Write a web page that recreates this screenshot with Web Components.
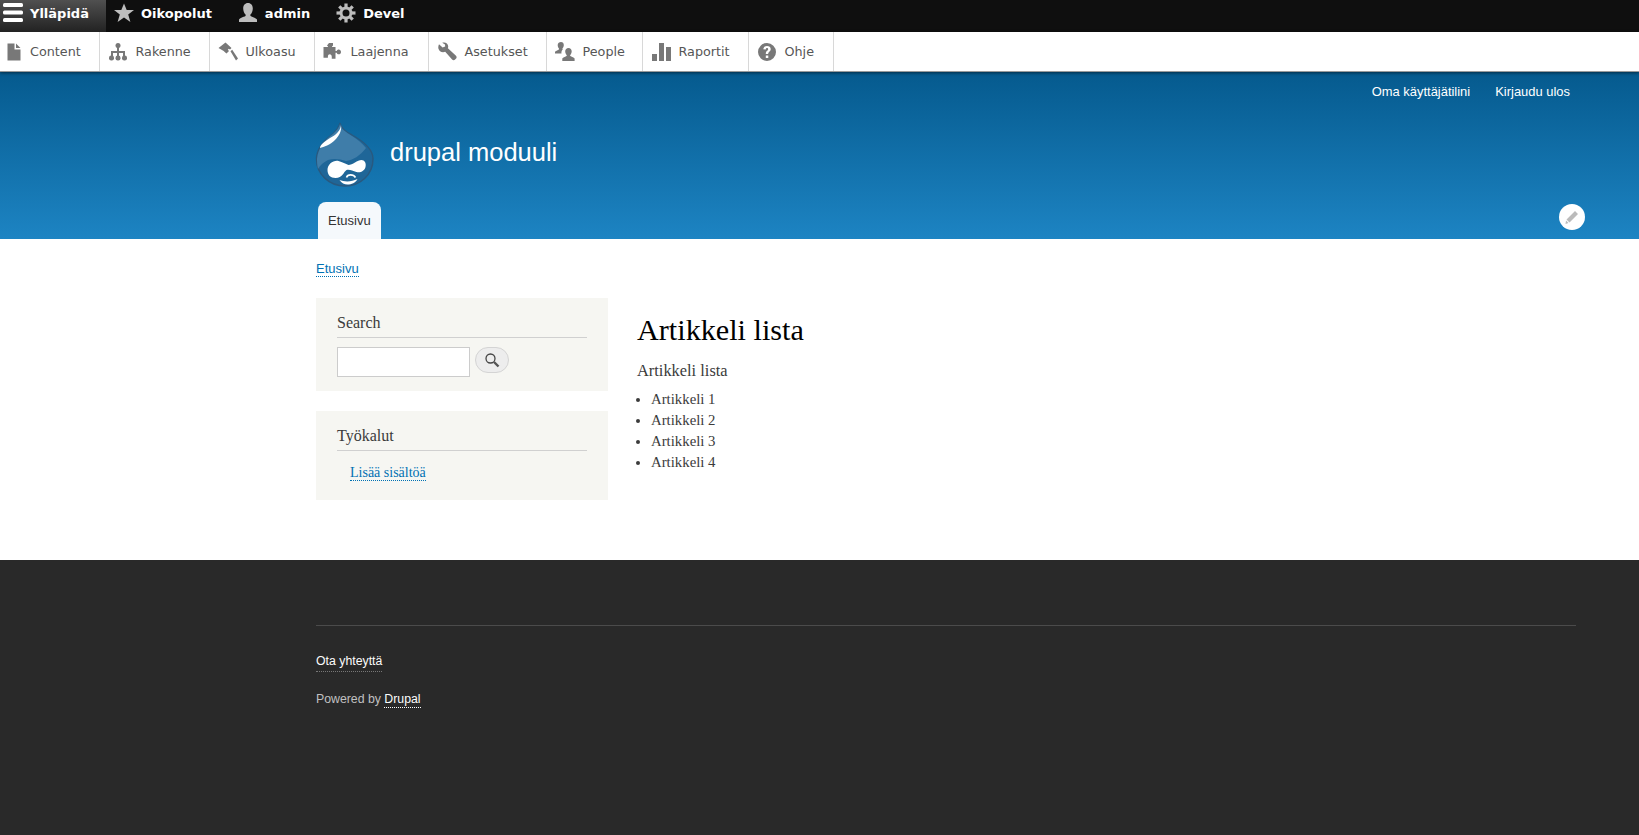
<!DOCTYPE html>
<html lang="fi">
<head>
<meta charset="utf-8">
<title>drupal moduuli</title>
<style>
  html, body { margin: 0; padding: 0; background: #292929; }
  body { font-family: "Liberation Serif", serif; min-height: 835px; display: flex; flex-direction: column; }
</style>
</head>
<body>
<admin-toolbar>
  <bar-tab icon="menu" active>Ylläpidä</bar-tab>
  <bar-tab icon="star">Oikopolut</bar-tab>
  <bar-tab icon="user">admin</bar-tab>
  <bar-tab icon="gear">Devel</bar-tab>
  <tray-item slot="tray" icon="file" w="100" first>Content</tray-item>
  <tray-item slot="tray" icon="tree" w="110">Rakenne</tray-item>
  <tray-item slot="tray" icon="hammer" w="105">Ulkoasu</tray-item>
  <tray-item slot="tray" icon="puzzle" w="114">Laajenna</tray-item>
  <tray-item slot="tray" icon="wrench" w="118">Asetukset</tray-item>
  <tray-item slot="tray" icon="people" w="96">People</tray-item>
  <tray-item slot="tray" icon="bars" w="106">Raportit</tray-item>
  <tray-item slot="tray" icon="help" w="85">Ohje</tray-item>
</admin-toolbar>
<site-header name="drupal moduuli">
  <a slot="secondary">Oma käyttäjätilini</a>
  <a slot="secondary">Kirjaudu ulos</a>
  <span slot="tabs">Etusivu</span>
</site-header>
<page-main>
  <dotted-link slot="crumb" sans>Etusivu</dotted-link>
  <side-block slot="side" heading="Search"><search-form></search-form></side-block>
  <side-block slot="side" heading="Työkalut"><tool-link><dotted-link>Lisää sisältöä</dotted-link></tool-link></side-block>
  <article-list heading="Artikkeli lista" lead="Artikkeli lista">
    <li>Artikkeli 1</li>
    <li>Artikkeli 2</li>
    <li>Artikkeli 3</li>
    <li>Artikkeli 4</li>
  </article-list>
</page-main>
<page-footer></page-footer>

<script>
// 8 teeth for the gear, easier than writing the outline by hand
const gearTeeth = [0, 45, 90, 135, 180, 225, 270, 315]
  .map(a => `<rect x="8.400" y="0.500" width="3.200" height="4" transform="rotate(${a} 10 10)"/>`).join('');

const ICONS = {
  menu: '<svg viewBox="0 0 20 20" width="20" height="20"><g fill="#fff"><rect x="0" y="0" width="20" height="4" rx="1.500"/><rect x="0" y="7.500" width="20" height="4" rx="1.500"/><rect x="0" y="15" width="20" height="4" rx="1.500"/></g></svg>',
  star: '<svg viewBox="0 0 20 20" width="20" height="20"><path fill="#bdbdbd" d="M10 .5l2.700 6.500H20l-5.800 4.600L16.400 19 10 14.600 3.600 19l2.200-7.400L0 7h7.300z"/></svg>',
  user: '<svg viewBox="0 0 20 20" width="20" height="20"><path fill="#bdbdbd" d="M10 0c3 0 4.800 2.300 4.800 5.400 0 2.600-1 4.700-2.300 6.100-.5.800 0 1.700 1 2.100 2 .8 4.500 1.600 5.500 3v2.400H1v-2.400c1-1.400 3.500-2.200 5.500-3 1-.4 1.500-1.300 1-2.100C6.200 10.100 5.200 8 5.200 5.400 5.200 2.300 7 0 10 0z"/></svg>',
  gear: `<svg viewBox="0 0 20 20" width="20" height="20"><g fill="#bdbdbd">${gearTeeth}</g><circle cx="10" cy="10" r="5" fill="none" stroke="#bdbdbd" stroke-width="3"/></svg>`,
  file: '<svg viewBox="0 0 16 20" width="16" height="20"><path fill="#787878" d="M1.500 1.500h7v6h6v11h-13zM10 1.500l4.500 4.500H10z"/></svg>',
  tree: '<svg viewBox="0 0 20 20" width="20" height="20"><g fill="#787878"><circle cx="10" cy="3.500" r="2.500"/><rect x="9" y="5" width="2" height="9"/><rect x="3" y="9" width="14" height="2"/><rect x="3" y="9" width="2" height="5"/><rect x="15" y="9" width="2" height="5"/><rect x="1" y="13.500" width="5" height="5" rx="2.200"/><rect x="7.500" y="13.500" width="5" height="5" rx="2.200"/><rect x="14" y="13.500" width="5" height="5" rx="2.200"/></g></svg>',
  hammer: '<svg viewBox="0 0 20 20" width="20" height="20"><path fill="#787878" d="M7.500.5l6 5.500-1.500 1.500-1.200-.8-1 1 1.200 1.300-2.500 2.500-1.800-1.500-1-1L.5 6zM12.500 9.300l1.700-1.600L20 16.500 18 18.500z"/></svg>',
  puzzle: '<svg viewBox="0 0 20 20" width="20" height="20"><path fill="#787878" d="M6 1h4v2.500L9 4.500V5h3.500v4h1.200c.4-1 1-1.500 2-1.500 1.300 0 2.300 1 2.300 2.400s-1 2.400-2.300 2.400c-1 0-1.600-.5-2-1.500h-1.200v6H9c-.5-.2-.2-1-.2-1.500C8.800 13 7.800 12.300 6.800 12.300S4.900 13 4.900 14.300c0 .5.300 1.300-.2 1.500H.5V5H5v-.5L4 3.500z"/></svg>',
  wrench: '<svg viewBox="0 0 20 20" width="20" height="20"><path fill="#787878" d="M2 2.200l3.600 3.200 2.600-1L8 2.500 5.200.8C8-.4 11 1.300 11.200 4.200c0 .8-.1 1.400-.3 2L19 13.700c.8.800.8 1.900.1 2.900l-1 1c-.9.900-2 .9-3 0L8.200 9.800c-3 1.200-6.200-.3-6.800-3.300-.3-1.500 0-3 .6-4.300z"/></svg>',
  people: '<svg viewBox="0 0 20 20" width="20" height="20"><path fill="#787878" d="M6 0C7.700 0 8.800 1.300 8.800 3c0 1.400-.6 2.600-1.300 3.400-.3.400 0 1 .4 1.300l-.6.300C6.500 9 6.300 10.500 6.500 11.500H0V9.800c.8-.8 2.300-1.300 3.500-2 .5-.3.700-.9.400-1.300C3.200 5.600 2.700 4.400 2.700 3 2.700 1.300 4.300 0 6 0zM13.500 6c1.900 0 3.200 1.500 3.200 3.300 0 1.500-.6 2.800-1.400 3.700-.4.500-.1 1 .5 1.300 1.300.7 3 1.200 3.800 2.200V19H7.300v-2.500c.8-1 2.500-1.500 3.800-2.200.6-.3.900-.8.500-1.300-.8-.9-1.400-2.200-1.400-3.700C10.200 7.500 11.600 6 13.500 6z"/></svg>',
  bars: '<svg viewBox="0 0 20 20" width="20" height="20"><g fill="#787878"><rect x="1" y="12" width="5" height="7"/><rect x="8" y="1" width="5" height="18"/><rect x="15" y="5" width="5" height="14"/></g></svg>',
  help: '<svg viewBox="0 0 20 20" width="20" height="20"><path fill="#787878" fill-rule="evenodd" d="M10 1a9 9 0 110 18 9 9 0 010-18zM8.800 13.500v2.500h2.500v-2.500zM10 4C7.900 4 6.500 5.200 6.300 7.300l2.400.3c.1-1 .5-1.500 1.300-1.500.7 0 1.200.4 1.200 1.100 0 .6-.4 1-1 1.500-1 .8-1.400 1.500-1.400 2.800v.4h2.400v-.3c0-.7.200-1 .9-1.600 1-.8 1.600-1.600 1.600-2.900C13.700 5.200 12.200 4 10 4z"/></svg>'
};

class AdminToolbar extends HTMLElement {
  constructor() {
    super();
    this.attachShadow({ mode: 'open' });
    this.shadowRoot.innerHTML = `
      <style>
        :host { display: block; position: relative; z-index: 2; }
        .top { display: flex; height: 32px; background: #0f0f0f; }
        .tray { display: flex; height: 39px; background: #fff; border-bottom: 1px solid #9a9a9a; box-shadow: 0 1px 3px rgba(0,0,0,.5); }
      </style>
      <div class="top"><slot></slot></div>
      <div class="tray"><slot name="tray"></slot></div>
    `;
  }
}

class BarTab extends HTMLElement {
  constructor() {
    super();
    this.attachShadow({ mode: 'open' });
    this.shadowRoot.innerHTML = `
      <style>
        :host { display: flex; align-items: center; gap: 7px; padding: 0 18px 6px 8px; height: 32px; box-sizing: border-box;
          font: bold 13px "DejaVu Sans", sans-serif; color: #fff; }
        :host([active]) { background: linear-gradient(#505050, #222); gap: 7px; padding: 0 17px 6px 3px; }
        svg { display: block; }
      </style>
      <span id="i" style="display:flex"></span><slot></slot>
    `;
  }
  connectedCallback() {
    this.shadowRoot.getElementById('i').innerHTML = ICONS[this.getAttribute('icon')] || '';
  }
}

class TrayItem extends HTMLElement {
  constructor() {
    super();
    this.attachShadow({ mode: 'open' });
    this.shadowRoot.innerHTML = `
      <style>
        :host { display: flex; align-items: center; gap: 8px; box-sizing: border-box; height: 39px; padding-left: 7.500px;
          border-right: 1px solid #d8d8d8; font: 12.750px "DejaVu Sans", sans-serif; color: #565656; }
        :host([first]) { padding-left: 6px; }
        svg { display: block; }
      </style>
      <span id="i" style="display:flex"></span><slot></slot>
    `;
  }
  connectedCallback() {
    this.style.width = this.getAttribute('w') + 'px';
    this.shadowRoot.getElementById('i').innerHTML = ICONS[this.getAttribute('icon')] || '';
  }
}

class DrupalLogo extends HTMLElement {
  constructor() {
    super();
    this.attachShadow({ mode: 'open' });
    this.shadowRoot.innerHTML = `
      <style>:host { display: block; width: 58px; height: 66px; } svg { display: block; overflow: visible; }</style>
      <svg viewBox="0 0 58 66" width="58" height="66">
        <path fill="#1f6698" stroke="#29597f" stroke-width="1.400" d="M24 0C25 6 30 9 36 12 47 18 57 26 57 36 57 52 44 63 29 63 13 63 .5 51 .5 36 .5 24 10 16 17 11 20 8 23 5 24 0z"/>
        <path fill="#3f7da9" d="M24 1C25 6 30 9 36 13 41 16 46 20 50 25 44 33 37 37 30 38 24 36 18 35 12 37 8 39 4 42 2 46 1 42 1 38 1 36 2 24 10 16 17 11 20 8 23 5 24 1z"/>
        <path fill="#fff" d="M25 2C25 7 20 12 14 15 9 18 4 22 4 25 8 24 14 22 19 17 23 13 26 8 25 2z"/>
        <g transform="translate(-1.500 0)">
          <path fill="#fff" d="M13 47C13 41 19 37 24 38 28 39 31 41 34 42 38 42 43 37 47 37 50 37 52 40 51 44 50 48 46 50 42 49 38 48 35 46 32 47 29 49 28 55 21 55 16 55 13 52 13 47z"/>
          <path fill="none" stroke="#fff" stroke-width="1.600" d="M32 54.500C33 51 39 51 41 54.500"/>
          <path fill="#fff" d="M25 57C30 59 37 59 43 56 41 60 37 61.500 33 61.500 30 61.500 27 60 25 57z"/>
        </g>
      </svg>
    `;
  }
}
customElements.define('drupal-logo', DrupalLogo);

class SiteHeader extends HTMLElement {
  constructor() {
    super();
    this.attachShadow({ mode: 'open' });
    this.shadowRoot.innerHTML = `
      <style>
        :host { display: block; position: relative; height: 167px; box-sizing: border-box;
          background: linear-gradient(#055a8e, #1d84c3); color: #fff; font-family: "Liberation Sans", sans-serif; }
        .secondary { display: flex; justify-content: flex-end; gap: 25px; padding: 12px 69px 0 0; height: 39px; box-sizing: border-box;
          font-size: 12.950px; line-height: 16px; }
        .brand { display: flex; align-items: center; gap: 16px; padding-left: 316px; height: 66px; margin-top: 12px; }
        .name { font-size: 25.500px; position: relative; top: -4px; }
        .tabs { display: flex; padding-left: 318px; margin-top: 13px; }
        .tab { display: flex; align-items: center; height: 37px; padding: 0 10px; box-sizing: border-box; background: #f5f9fc;
          border-radius: 8px 8px 0 0; color: #333; font-size: 13px; }
        .pencil { position: absolute; right: 54px; bottom: 9px; width: 26px; height: 26px; border-radius: 50%; background: #fff;
          display: flex; align-items: center; justify-content: center; }
        ::slotted(a) { color: #fff; }
      </style>
      <div class="secondary"><slot name="secondary"></slot></div>
      <div class="brand"><drupal-logo></drupal-logo><span class="name" id="n"></span></div>
      <div class="tabs"><div class="tab"><slot name="tabs"></slot></div></div>
      <div class="pencil"><svg viewBox="0 0 16 16" width="16" height="16"><path fill="#bbb" d="M11 2l3 3-8.500 8.500-3-3zM2 11.500L4.500 14 1.500 15z"/></svg></div>
    `;
  }
  connectedCallback() {
    this.shadowRoot.getElementById('n').textContent = this.getAttribute('name');
  }
}

class DottedLink extends HTMLElement {
  constructor() {
    super();
    this.attachShadow({ mode: 'open' });
    this.shadowRoot.innerHTML = `
      <style>
        :host { display: inline-block; color: #0071b3; border-bottom: 1px dotted #0071b3; line-height: 15px; }
        :host([sans]) { font: 13px/15px "Liberation Sans", sans-serif; }
      </style>
      <slot></slot>
    `;
  }
}

class SideBlock extends HTMLElement {
  constructor() {
    super();
    this.attachShadow({ mode: 'open' });
    this.shadowRoot.innerHTML = `
      <style>
        :host { display: block; background: #f6f6f2; padding: 15px 21px 0; box-sizing: border-box; color: #3b3b3b; }
        h2 { margin: 0 0 9px; font: normal 16px/19px "Liberation Serif", serif; border-bottom: 1px solid #d0d0d0; height: 24px; }
      </style>
      <h2 id="h"></h2>
      <slot></slot>
    `;
  }
  connectedCallback() {
    this.shadowRoot.getElementById('h').textContent = this.getAttribute('heading');
  }
}

class SearchForm extends HTMLElement {
  constructor() {
    super();
    this.attachShadow({ mode: 'open' });
    this.shadowRoot.innerHTML = `
      <style>
        :host { display: flex; gap: 5px; align-items: flex-start; padding-bottom: 14px; }
        .input { width: 133px; height: 30px; box-sizing: border-box; background: #fff; border: 1px solid #ccc; }
        .btn { width: 34px; height: 26px; box-sizing: border-box; border: 1px solid #d4d4d4; border-radius: 13px; background: #ededed;
          display: flex; align-items: center; justify-content: center; }
        svg { display: block; }
      </style>
      <div class="input"></div>
      <div class="btn"><svg viewBox="0 0 16 16" width="16" height="16"><circle cx="6.500" cy="6.500" r="4.500" fill="none" stroke="#444" stroke-width="1.300"/><path d="M10 10l4.500 4.500" stroke="#555" stroke-width="2.400"/></svg></div>
    `;
  }
}

class ToolLink extends HTMLElement {
  constructor() {
    super();
    this.attachShadow({ mode: 'open' });
    this.shadowRoot.innerHTML = `
      <style>:host { display: block; padding: 5px 0 19px 13px; font-size: 14px; }</style>
      <slot></slot>
    `;
  }
}

class ArticleList extends HTMLElement {
  constructor() {
    super();
    this.attachShadow({ mode: 'open' });
    this.shadowRoot.innerHTML = `
      <style>
        :host { display: block; color: #3b3b3b; font-size: 14.800px; }
        h1 { margin: 0 0 12px; font: normal 30.200px/36px "Liberation Serif", serif; color: #000; }
        p { margin: 0 0 8px; line-height: 21px; font-size: 16.400px; }
        ul { margin: 0; padding: 0 0 0 14px; }
        ::slotted(li) { line-height: 21px; }
      </style>
      <h1 id="h"></h1>
      <p id="l"></p>
      <ul><slot></slot></ul>
    `;
  }
  connectedCallback() {
    this.shadowRoot.getElementById('h').textContent = this.getAttribute('heading');
    this.shadowRoot.getElementById('l').textContent = this.getAttribute('lead');
  }
}

class PageMain extends HTMLElement {
  constructor() {
    super();
    this.attachShadow({ mode: 'open' });
    this.shadowRoot.innerHTML = `
      <style>
        :host { display: block; background: #fff; height: 321px; box-sizing: border-box; padding: 20px 0 0 316px; }
        .crumb { height: 39px; }
        .cols { display: grid; grid-template-columns: 292px 1fr; column-gap: 30px; }
        .side { display: flex; flex-direction: column; gap: 20px; }
        .content { padding-top: 14px; margin-left: -1px; }
      </style>
      <div class="crumb"><slot name="crumb"></slot></div>
      <div class="cols">
        <div class="side"><slot name="side"></slot></div>
        <div class="content"><slot></slot></div>
      </div>
    `;
  }
}

class PageFooter extends HTMLElement {
  constructor() {
    super();
    this.attachShadow({ mode: 'open' });
    this.shadowRoot.innerHTML = `
      <style>
        :host { display: block; flex: 1; background: #292929; padding: 65px 63px 0 316px; color: #c0c0c0;
          font: 12.300px/15px "Liberation Sans", sans-serif; }
        .line { border-top: 1px solid #4b4b4b; height: 28px; }
        .contact { display: inline-block; color: #fcfcfc; border-bottom: 1px dotted #777; padding-bottom: 2px; }
        .pw { margin-top: 20px; }
        .pw span { color: #fcfcfc; border-bottom: 1px dotted #fcfcfc; padding-bottom: 1px; }
      </style>
      <div class="line"></div>
      <div><span class="contact">Ota yhteyttä</span></div>
      <div class="pw">Powered by <span>Drupal</span></div>
    `;
  }
}

customElements.define('admin-toolbar', AdminToolbar);
customElements.define('bar-tab', BarTab);
customElements.define('tray-item', TrayItem);
customElements.define('site-header', SiteHeader);
customElements.define('dotted-link', DottedLink);
customElements.define('side-block', SideBlock);
customElements.define('search-form', SearchForm);
customElements.define('tool-link', ToolLink);
customElements.define('article-list', ArticleList);
customElements.define('page-main', PageMain);
customElements.define('page-footer', PageFooter);
</script>
</body>
</html>
